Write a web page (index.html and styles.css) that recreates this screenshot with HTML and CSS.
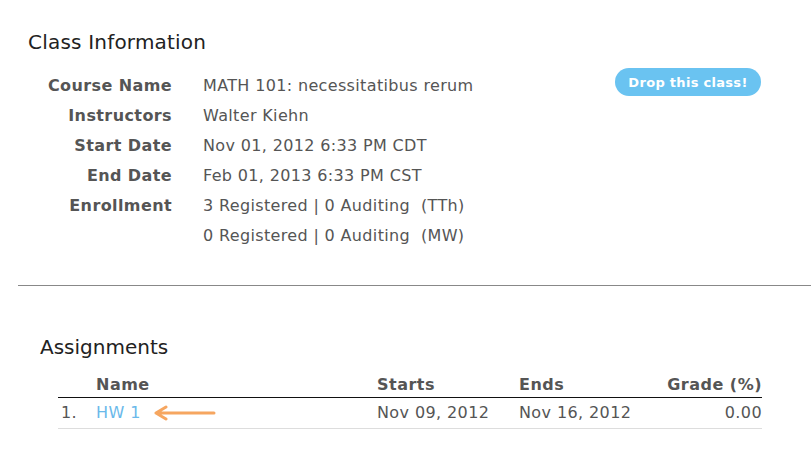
FILE: index.html
```html
<!DOCTYPE html>
<html>
<head>
<meta charset="utf-8">
<link rel="stylesheet" href="styles.css">
</head>
<body>
<section class="info">
  <h1 class="title">Class Information</h1>
  <div class="info-body">
    <dl class="details">
      <dt>Course Name</dt><dd>MATH 101: necessitatibus rerum</dd>
      <dt>Instructors</dt><dd>Walter Kiehn</dd>
      <dt>Start Date</dt><dd>Nov 01, 2012 6:33 PM CDT</dd>
      <dt>End Date</dt><dd>Feb 01, 2013 6:33 PM CST</dd>
      <dt>Enrollment</dt><dd>3 Registered | 0 Auditing &nbsp;(TTh)</dd>
      <dt></dt><dd>0 Registered | 0 Auditing &nbsp;(MW)</dd>
    </dl>
    <button class="drop">Drop this class!</button>
  </div>
</section>
<hr class="divider">
<section class="assignments">
  <h2 class="title sub">Assignments</h2>
  <table class="grid">
    <thead>
      <tr><th class="num"></th><th class="name">Name</th><th class="starts">Starts</th><th class="ends">Ends</th><th class="grade">Grade (%)</th></tr>
    </thead>
    <tbody>
      <tr>
        <td class="num">1.</td>
        <td class="name"><span class="link">HW 1</span><svg class="arrow" width="64" height="16" viewBox="0 0 64 16"><path d="M61 8 H3 M13 2 L3 8 L13 14" fill="none" stroke="#f6a660" stroke-width="3" stroke-linecap="round" stroke-linejoin="round"/></svg></td>
        <td class="starts">Nov 09, 2012</td>
        <td class="ends">Nov 16, 2012</td>
        <td class="grade">0.00</td>
      </tr>
    </tbody>
  </table>
</section>
</body>
</html>
```
FILE: styles.css
```css
html, body {
  margin: 0;
  padding: 0;
  background: #fff;
}
body {
  font-family: "DejaVu Sans", Verdana, sans-serif;
  color: #555;
  width: 811px;
  height: 460px;
  overflow: hidden;
}
.info {
  padding: 30px 50px 0 28px;
}
.title {
  margin: 0;
  font-size: 20px;
  font-weight: normal;
  color: #222;
  line-height: 24px;
  letter-spacing: 0.2px;
}
.info-body {
  display: flex;
  justify-content: space-between;
  align-items: flex-start;
  margin-top: 17px;
}
.details {
  display: grid;
  grid-template-columns: 144px auto;
  column-gap: 31px;
  margin: 0;
  font-size: 16px;
  line-height: 30px;
}
.details dt {
  text-align: right;
  font-weight: bold;
  color: #555;
  letter-spacing: 0.4px;
}
.details dd {
  margin: 0;
  color: #555;
  letter-spacing: 0.35px;
}
.drop {
  margin-top: -3px;
  width: 146px;
  height: 28px;
  border: none;
  border-radius: 14px;
  background: #6ac3f1;
  color: #fff;
  font-family: "DejaVu Sans", Verdana, sans-serif;
  font-size: 13px;
  font-weight: bold;
  letter-spacing: 0.3px;
  padding: 0;
}
.divider {
  margin: 34px 0 0 18px;
  border: none;
  border-top: 1px solid #888;
  height: 0;
}
.assignments {
  padding: 49px 49px 0 40px;
}
.sub {
  margin-bottom: 16px;
  letter-spacing: 0;
}
.grid {
  margin-left: 18px;
  width: 704px;
  border-collapse: collapse;
  font-size: 16px;
}
.grid th {
  font-weight: bold;
  color: #555;
  text-align: left;
  padding: 0 0 2px;
  border-bottom: 1px solid #111;
  line-height: 20px;
  letter-spacing: 0.5px;
}
.grid td {
  padding: 5px 0 5px;
  line-height: 20px;
  border-bottom: 1px solid #ddd;
  color: #555;
  letter-spacing: 0.4px;
}
.grid .num { width: 35px; padding-left: 3px; }
.grid .name { width: 281px; }
.grid .starts { width: 142px; }
.grid .ends { width: 140px; }
.grid .grade { text-align: right; }
.link {
  color: #6ab9ea;
}
.arrow {
  vertical-align: middle;
  margin-left: 12px;
  position: relative;
  top: -1px;
}
```
